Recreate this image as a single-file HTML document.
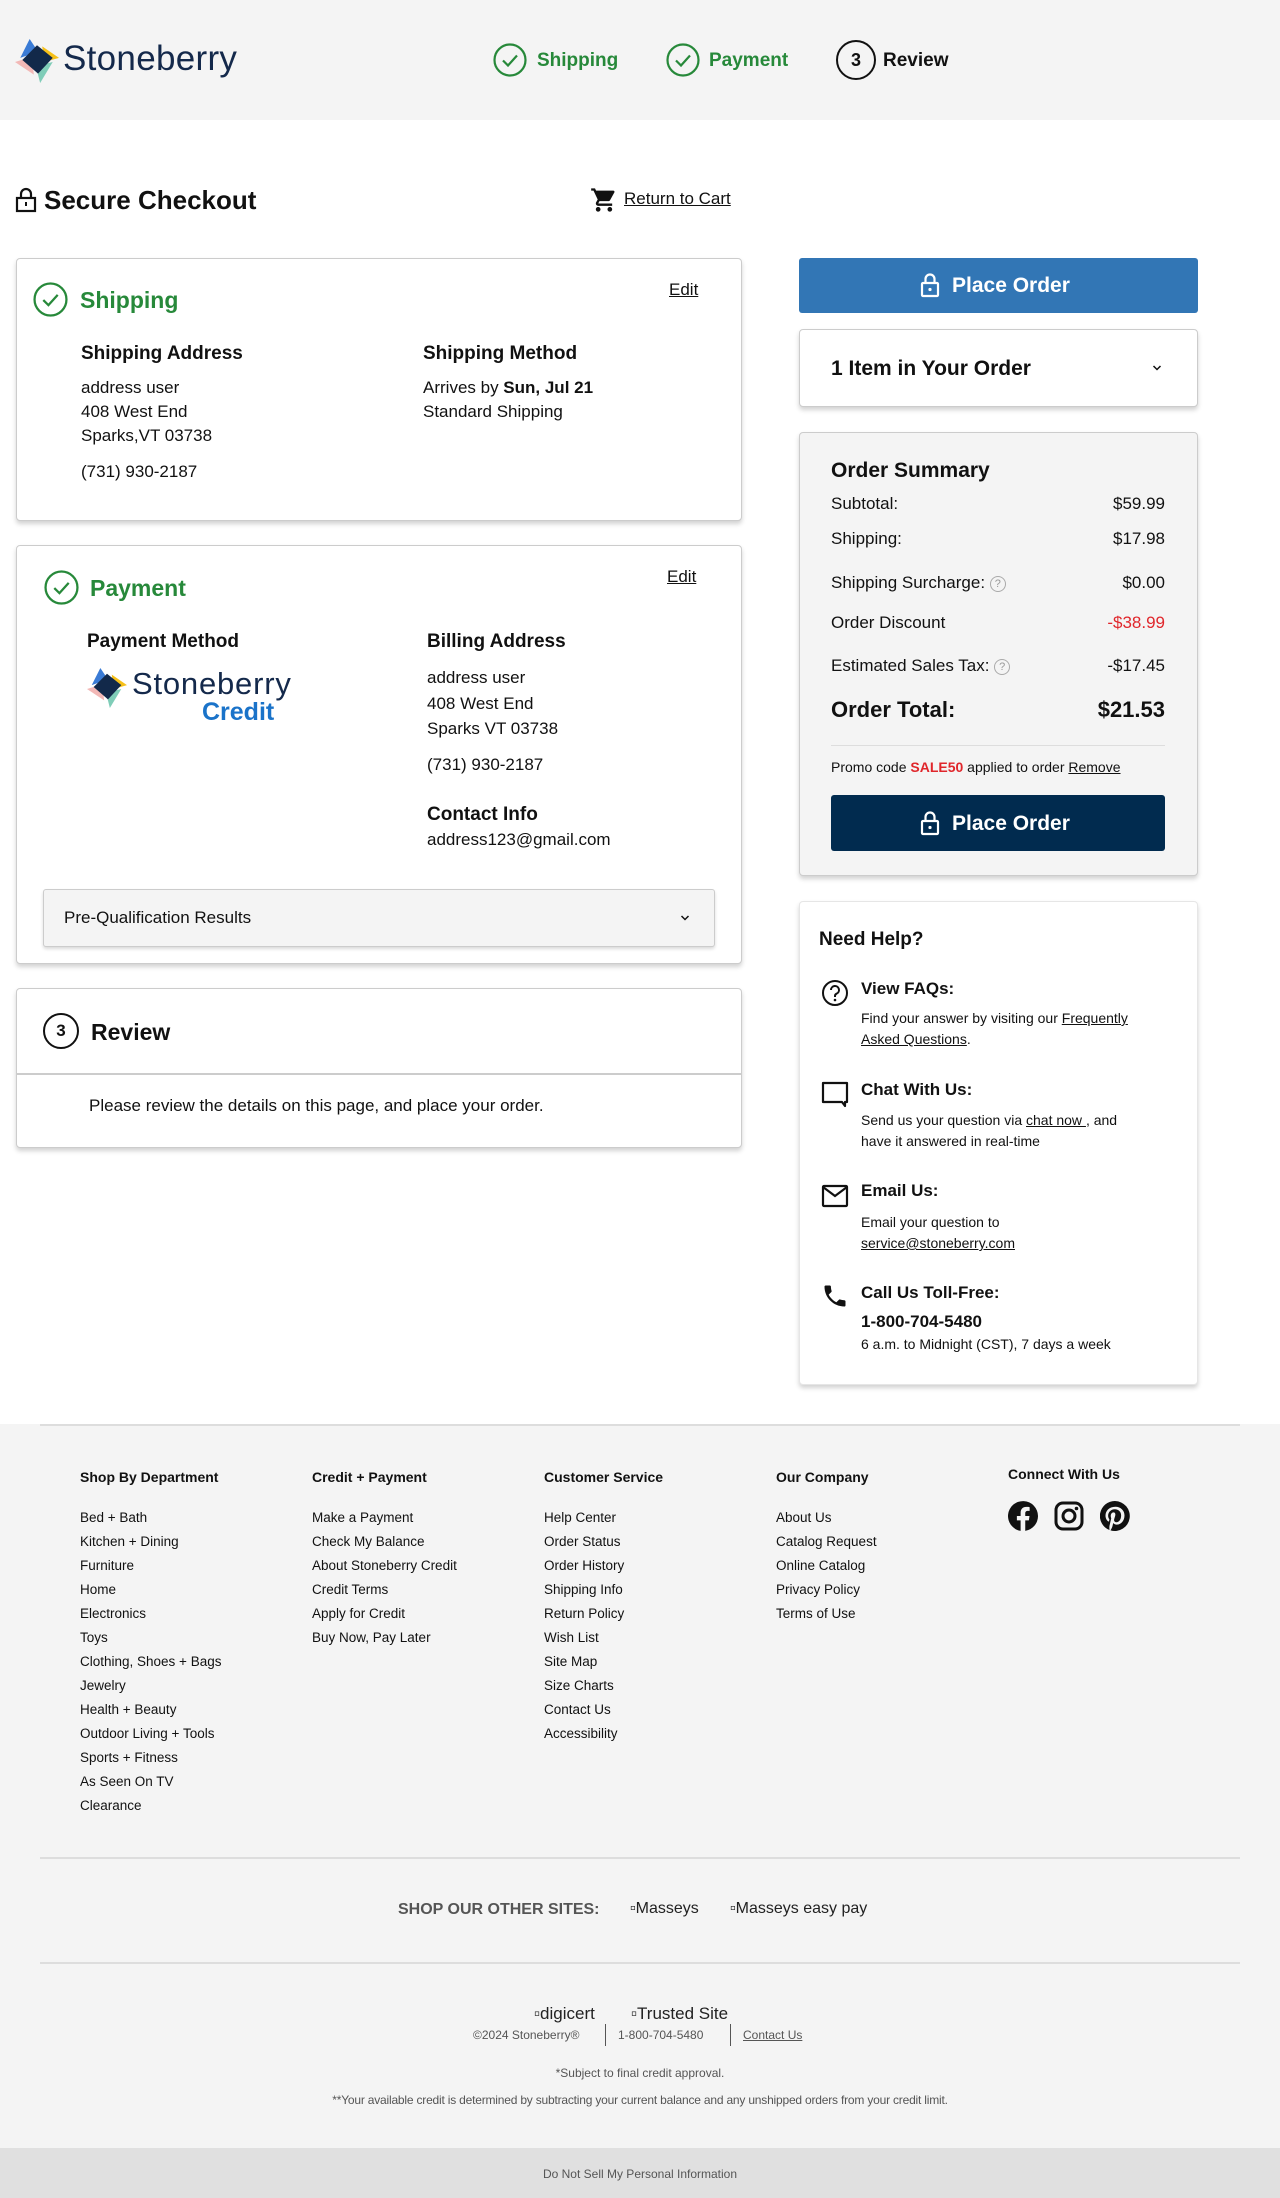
<!DOCTYPE html>
<html><head><meta charset="utf-8"><style>
*{margin:0;padding:0;box-sizing:border-box}
body{width:1280px;height:2198px;position:relative;background:#fff;font-family:"Liberation Sans",Arial,sans-serif;color:#111;overflow:hidden}
.a{position:absolute;white-space:nowrap}
.card{position:absolute;background:#fff;border:1px solid #ccc;border-radius:4px;box-shadow:0 3px 5px rgba(0,0,0,.18)}
.g{color:#27893a;font-weight:bold}
.u{text-decoration:underline}
.b{font-weight:bold}
.f17{font-size:17px;line-height:22px}
.f14{font-size:14px;line-height:18px}
.f13{font-size:13.5px;line-height:18px}
.f12{font-size:12px;line-height:16px}
</style></head><body>
<!-- header -->
<div class="a" style="left:0;top:0;width:1280px;height:120px;background:#f4f4f4"></div>
<svg class="a" style="left:15px;top:39px" width="44" height="44" viewBox="0 0 42 42">
<polygon points="0,22 16,17 18,34" fill="#f2b8b6"/>
<polygon points="20,26 36,22 24,42" fill="#7fcdb8"/>
<polygon points="14,0 22,12 5,18" fill="#3a7bd5"/>
<polygon points="26,7 42,18 28,22" fill="#f6c018"/>
<polygon points="21,6 36,18 22,33 7,20" fill="#12294a"/>
</svg>
<div class="a" style="left:63px;top:37px;font-size:35px;line-height:44px;color:#14294b;letter-spacing:0.3px">Stoneberry</div>
<svg class="a" style="left:493px;top:43px" width="34" height="34" viewBox="0 0 34 34"><circle cx="17" cy="17" r="15.5" fill="none" stroke="#27893a" stroke-width="2.2"/><path d="M10 17.5l5 5 9-10" fill="none" stroke="#27893a" stroke-width="2.2"/></svg>
<div class="a g" style="left:537px;top:49px;font-size:19px;line-height:24px">Shipping</div>
<svg class="a" style="left:666px;top:43px" width="34" height="34" viewBox="0 0 34 34"><circle cx="17" cy="17" r="15.5" fill="none" stroke="#27893a" stroke-width="2.2"/><path d="M10 17.5l5 5 9-10" fill="none" stroke="#27893a" stroke-width="2.2"/></svg>
<div class="a g" style="left:709px;top:49px;font-size:19px;line-height:24px">Payment</div>
<div class="a" style="left:836px;top:40px;width:40px;height:40px;border:2.2px solid #111;border-radius:50%;text-align:center;font-size:18px;line-height:36px;font-weight:bold">3</div>
<div class="a b" style="left:883px;top:49px;font-size:19px;line-height:24px">Review</div>

<!-- secure checkout -->
<svg class="a" style="left:15px;top:187px" width="22" height="26" viewBox="0 0 22 26"><rect x="2" y="11" width="18" height="13" fill="none" stroke="#111" stroke-width="2.2"/><path d="M6 11V7a5 5 0 0 1 10 0v4" fill="none" stroke="#111" stroke-width="2.2"/><rect x="10" y="15" width="2" height="4" fill="#111"/></svg>
<div class="a b" style="left:44px;top:184px;font-size:26px;line-height:32px">Secure Checkout</div>
<svg class="a" style="left:590px;top:186px" width="28" height="28" viewBox="0 0 24 24"><path d="M7 18c-1.1 0-2 .9-2 2s.9 2 2 2 2-.9 2-2-.9-2-2-2zM1 2v2h2l3.6 7.6-1.4 2.4c-.1.3-.2.6-.2 1 0 1.1.9 2 2 2h12v-2H7.4c-.1 0-.2-.1-.2-.2v-.1l.9-1.7h7.5c.8 0 1.4-.4 1.7-1l3.6-6.5c.1-.2.1-.3.1-.5 0-.6-.4-1-1-1H5.2L4.3 2H1zm16 16c-1.1 0-2 .9-2 2s.9 2 2 2 2-.9 2-2-.9-2-2-2z" fill="#111"/></svg>
<div class="a u f17" style="left:624px;top:188px">Return to Cart</div>

<!-- shipping card -->
<div class="card" style="left:16px;top:258px;width:726px;height:263px"></div>
<svg class="a" style="left:33px;top:282px" width="35" height="35" viewBox="0 0 34 34"><circle cx="17" cy="17" r="15.5" fill="none" stroke="#27893a" stroke-width="2.2"/><path d="M10 17.5l5 5 9-10" fill="none" stroke="#27893a" stroke-width="2.2"/></svg>
<div class="a g" style="left:80px;top:286px;font-size:23px;line-height:28px">Shipping</div>
<div class="a u f17" style="left:669px;top:279px">Edit</div>
<div class="a b" style="left:81px;top:342px;font-size:19px;line-height:24px">Shipping Address</div>
<div class="a b" style="left:423px;top:342px;font-size:19px;line-height:24px">Shipping Method</div>
<div class="a f17" style="left:81px;top:377px">address user</div>
<div class="a f17" style="left:81px;top:401px">408 West End</div>
<div class="a f17" style="left:81px;top:425px">Sparks,VT 03738</div>
<div class="a f17" style="left:81px;top:461px">(731) 930-2187</div>
<div class="a f17" style="left:423px;top:377px">Arrives by <b>Sun, Jul 21</b></div>
<div class="a f17" style="left:423px;top:401px">Standard Shipping</div>

<!-- payment card -->
<div class="card" style="left:16px;top:545px;width:726px;height:419px"></div>
<svg class="a" style="left:44px;top:570px" width="35" height="35" viewBox="0 0 34 34"><circle cx="17" cy="17" r="15.5" fill="none" stroke="#27893a" stroke-width="2.2"/><path d="M10 17.5l5 5 9-10" fill="none" stroke="#27893a" stroke-width="2.2"/></svg>
<div class="a g" style="left:90px;top:574px;font-size:23px;line-height:28px">Payment</div>
<div class="a u f17" style="left:667px;top:566px">Edit</div>
<div class="a b" style="left:87px;top:630px;font-size:19px;line-height:24px">Payment Method</div>
<div class="a b" style="left:427px;top:630px;font-size:19px;line-height:24px">Billing Address</div>
<svg class="a" style="left:87px;top:668px" width="40" height="40" viewBox="0 0 42 42">
<polygon points="0,22 16,17 18,34" fill="#f2b8b6"/>
<polygon points="20,26 36,22 24,42" fill="#7fcdb8"/>
<polygon points="14,0 22,12 5,18" fill="#3a7bd5"/>
<polygon points="26,7 42,18 28,22" fill="#f6c018"/>
<polygon points="21,6 36,18 22,33 7,20" fill="#12294a"/>
</svg>
<div class="a" style="left:132px;top:666px;font-size:31px;line-height:36px;color:#14294b;letter-spacing:0.8px">Stoneberry</div>
<div class="a b" style="left:202px;top:697px;font-size:25px;line-height:30px;color:#1a73c9">Credit</div>
<div class="a f17" style="left:427px;top:667px">address user</div>
<div class="a f17" style="left:427px;top:693px">408 West End</div>
<div class="a f17" style="left:427px;top:718px">Sparks VT 03738</div>
<div class="a f17" style="left:427px;top:754px">(731) 930-2187</div>
<div class="a b" style="left:427px;top:803px;font-size:19px;line-height:24px">Contact Info</div>
<div class="a f17" style="left:427px;top:829px">address123@gmail.com</div>
<div class="a" style="left:43px;top:889px;width:672px;height:58px;background:#f4f4f4;border:1px solid #ccc;border-radius:3px;box-shadow:0 2px 3px rgba(0,0,0,.15)"></div>
<div class="a f17" style="left:64px;top:907px">Pre-Qualification Results</div>
<svg class="a" style="left:680px;top:914px" width="10" height="8" viewBox="0 0 10 8"><path d="M1.5 2l3.5 3.5L8.5 2" fill="none" stroke="#111" stroke-width="1.5"/></svg>

<!-- review card -->
<div class="card" style="left:16px;top:988px;width:726px;height:160px"></div>
<div class="a" style="left:43px;top:1013px;width:36px;height:36px;border:2.2px solid #111;border-radius:50%;text-align:center;font-size:17px;line-height:32px;font-weight:bold">3</div>
<div class="a b" style="left:91px;top:1018px;font-size:23px;line-height:28px">Review</div>
<div class="a" style="left:17px;top:1073px;width:724px;height:2px;background:#ccc"></div>
<div class="a f17" style="left:89px;top:1095px">Please review the details on this page, and place your order.</div>

<!-- right column -->
<div class="a" style="left:799px;top:258px;width:399px;height:55px;background:#3276b5;border-radius:3px"></div>
<svg class="a" style="left:920px;top:272px" width="20" height="26" viewBox="0 0 20 26"><rect x="2" y="11" width="16" height="13" rx="1" fill="none" stroke="#fff" stroke-width="2.2"/><path d="M5.5 11V7a4.5 4.5 0 0 1 9 0v4" fill="none" stroke="#fff" stroke-width="2.2"/><circle cx="10" cy="17.5" r="1.6" fill="#fff"/></svg>
<div class="a b" style="left:952px;top:273px;font-size:21px;line-height:26px;color:#fff">Place Order</div>

<div class="card" style="left:799px;top:329px;width:399px;height:78px"></div>
<div class="a b" style="left:831px;top:356px;font-size:21px;line-height:26px">1 Item in Your Order</div>
<svg class="a" style="left:1152px;top:364px" width="10" height="8" viewBox="0 0 10 8"><path d="M1.5 2l3.5 3.5L8.5 2" fill="none" stroke="#111" stroke-width="1.5"/></svg>

<div class="card" style="left:799px;top:432px;width:399px;height:444px;background:#f4f4f4"></div>
<div class="a b" style="left:831px;top:458px;font-size:21px;line-height:26px">Order Summary</div>
<div class="a f17" style="left:831px;top:493px">Subtotal:</div><div class="a f17" style="right:115px;top:493px">$59.99</div>
<div class="a f17" style="left:831px;top:528px">Shipping:</div><div class="a f17" style="right:115px;top:528px">$17.98</div>
<div class="a f17" style="left:831px;top:572px">Shipping Surcharge: <span style="display:inline-block;width:16px;height:16px;border:1px solid #aaa;border-radius:50%;font-size:11px;line-height:14px;text-align:center;color:#999;vertical-align:middle">?</span></div><div class="a f17" style="right:115px;top:572px">$0.00</div>
<div class="a f17" style="left:831px;top:612px">Order Discount</div><div class="a f17" style="right:115px;top:612px;color:#e0262b">-$38.99</div>
<div class="a f17" style="left:831px;top:655px">Estimated Sales Tax: <span style="display:inline-block;width:16px;height:16px;border:1px solid #aaa;border-radius:50%;font-size:11px;line-height:14px;text-align:center;color:#999;vertical-align:middle">?</span></div><div class="a f17" style="right:115px;top:655px">-$17.45</div>
<div class="a b" style="left:831px;top:696px;font-size:22px;line-height:27px">Order Total:</div><div class="a b" style="right:115px;top:696px;font-size:22px;line-height:27px">$21.53</div>
<div class="a" style="left:831px;top:745px;width:334px;height:1px;background:#ddd"></div>
<div class="a f14" style="left:831px;top:758px">Promo code <b style="color:#e0262b">SALE50</b> applied to order <span class="u">Remove</span></div>
<div class="a" style="left:831px;top:795px;width:334px;height:56px;background:#012b4f;border-radius:3px"></div>
<svg class="a" style="left:920px;top:810px" width="20" height="26" viewBox="0 0 20 26"><rect x="2" y="11" width="16" height="13" rx="1" fill="none" stroke="#fff" stroke-width="2.2"/><path d="M5.5 11V7a4.5 4.5 0 0 1 9 0v4" fill="none" stroke="#fff" stroke-width="2.2"/><circle cx="10" cy="17.5" r="1.6" fill="#fff"/></svg>
<div class="a b" style="left:952px;top:811px;font-size:21px;line-height:26px;color:#fff">Place Order</div>

<div class="card" style="left:799px;top:901px;width:399px;height:484px;border-color:#e6e6e6"></div>
<div class="a b" style="left:819px;top:928px;font-size:19px;line-height:24px">Need Help?</div>
<svg class="a" style="left:821px;top:979px" width="28" height="28" viewBox="0 0 28 28"><circle cx="14" cy="14" r="12" fill="none" stroke="#111" stroke-width="2"/><path d="M10 11a4 4 0 1 1 5.5 3.7c-1 .5-1.5 1.2-1.5 2.3v1" fill="none" stroke="#111" stroke-width="2"/><circle cx="14" cy="21" r="1.3" fill="#111"/></svg>
<div class="a b" style="left:861px;top:978px;font-size:17px;line-height:22px">View FAQs:</div>
<div class="a f14" style="left:861px;top:1009px">Find your answer by visiting our <span class="u">Frequently</span></div>
<div class="a f14" style="left:861px;top:1030px"><span class="u">Asked Questions</span>.</div>
<svg class="a" style="left:821px;top:1080px" width="28" height="28" viewBox="0 0 28 28"><path d="M2 3h24v19H24v4l-3-4H2z" fill="none" stroke="#111" stroke-width="2.2" stroke-linejoin="round"/></svg>
<div class="a b" style="left:861px;top:1079px;font-size:17px;line-height:22px">Chat With Us:</div>
<div class="a f14" style="left:861px;top:1111px">Send us your question via <span class="u">chat now </span>, and</div>
<div class="a f14" style="left:861px;top:1132px">have it answered in real-time</div>
<svg class="a" style="left:821px;top:1184px" width="28" height="24" viewBox="0 0 28 24"><rect x="2" y="2" width="24" height="20" rx="1" fill="none" stroke="#111" stroke-width="2.2"/><path d="M2 3l12 9 12-9" fill="none" stroke="#111" stroke-width="2.2"/></svg>
<div class="a b" style="left:861px;top:1180px;font-size:17px;line-height:22px">Email Us:</div>
<div class="a f14" style="left:861px;top:1213px">Email your question to</div>
<div class="a f14 u" style="left:861px;top:1234px">service@stoneberry.com</div>
<svg class="a" style="left:821px;top:1282px" width="28" height="28" viewBox="0 0 24 24"><path d="M6.6 10.8c1.4 2.8 3.8 5.1 6.6 6.6l2.2-2.2c.3-.3.7-.4 1-.2 1.1.4 2.3.6 3.6.6.6 0 1 .4 1 1V20c0 .6-.4 1-1 1C10.6 21 3 13.4 3 4c0-.6.4-1 1-1h3.5c.6 0 1 .4 1 1 0 1.3.2 2.5.6 3.6.1.3 0 .7-.2 1z" fill="#111"/></svg>
<div class="a b" style="left:861px;top:1282px;font-size:17px;line-height:22px">Call Us Toll-Free:</div>
<div class="a b" style="left:861px;top:1311px;font-size:17px;line-height:22px">1-800-704-5480</div>
<div class="a f14" style="left:861px;top:1335px">6 a.m. to Midnight (CST), 7 days a week</div>

<!-- footer -->
<div class="a" style="left:0;top:1424px;width:1280px;height:724px;background:#f4f4f4"></div>
<div class="a" style="left:40px;top:1424px;width:1200px;height:2px;background:#ddd"></div>
<div class="a b f14" style="left:80px;top:1468px">Shop By Department</div>
<div class="a b f14" style="left:312px;top:1468px">Credit + Payment</div>
<div class="a b f14" style="left:544px;top:1468px">Customer Service</div>
<div class="a b f14" style="left:776px;top:1468px">Our Company</div>
<div class="a b f14" style="left:1008px;top:1465px">Connect With Us</div>
<div class="a f13" style="left:80px;top:1506px;line-height:24px">Bed + Bath<br>Kitchen + Dining<br>Furniture<br>Home<br>Electronics<br>Toys<br>Clothing, Shoes + Bags<br>Jewelry<br>Health + Beauty<br>Outdoor Living + Tools<br>Sports + Fitness<br>As Seen On TV<br>Clearance</div>
<div class="a f13" style="left:312px;top:1506px;line-height:24px">Make a Payment<br>Check My Balance<br>About Stoneberry Credit<br>Credit Terms<br>Apply for Credit<br>Buy Now, Pay Later</div>
<div class="a f13" style="left:544px;top:1506px;line-height:24px">Help Center<br>Order Status<br>Order History<br>Shipping Info<br>Return Policy<br>Wish List<br>Site Map<br>Size Charts<br>Contact Us<br>Accessibility</div>
<div class="a f13" style="left:776px;top:1506px;line-height:24px">About Us<br>Catalog Request<br>Online Catalog<br>Privacy Policy<br>Terms of Use</div>
<svg class="a" style="left:1008px;top:1501px" width="30" height="30" viewBox="0 0 24 24"><path d="M24 12a12 12 0 1 0-13.9 11.9v-8.4H7.1V12h3V9.4c0-3 1.8-4.7 4.5-4.7 1.3 0 2.7.2 2.7.2v3h-1.5c-1.5 0-2 .9-2 1.9V12h3.4l-.5 3.5h-2.9v8.4A12 12 0 0 0 24 12z" fill="#111"/></svg>
<svg class="a" style="left:1054px;top:1501px" width="30" height="30" viewBox="0 0 30 30"><rect x="2" y="2" width="26" height="26" rx="7" fill="none" stroke="#111" stroke-width="3"/><circle cx="15" cy="15" r="6" fill="none" stroke="#111" stroke-width="3"/><circle cx="22.5" cy="7.5" r="1.8" fill="#111"/></svg>
<svg class="a" style="left:1100px;top:1501px" width="30" height="30" viewBox="0 0 24 24"><path d="M12 0a12 12 0 0 0-4.4 23.2c-.1-.9-.2-2.4 0-3.4l1.4-6s-.4-.7-.4-1.8c0-1.7 1-2.9 2.2-2.9 1 0 1.5.8 1.5 1.7 0 1-.7 2.6-1 4-.3 1.2.6 2.2 1.8 2.2 2.1 0 3.8-2.2 3.8-5.5 0-2.9-2.1-4.9-5-4.9-3.4 0-5.4 2.6-5.4 5.2 0 1 .4 2.1.9 2.7.1.1.1.2.1.3l-.3 1.4c-.1.2-.2.3-.4.2-1.5-.7-2.4-2.900-2.4-4.6 0-3.8 2.7-7.2 7.9-7.2 4.1 0 7.3 2.9 7.3 6.9 0 4.1-2.6 7.4-6.2 7.4-1.2 0-2.4-.6-2.8-1.4l-.7 2.9c-.3 1-1 2.3-1.5 3.1A12 12 0 1 0 12 0z" fill="#111"/></svg>
<div class="a" style="left:40px;top:1857px;width:1200px;height:2px;background:#ddd"></div>
<div class="a b" style="left:398px;top:1900px;font-size:16px;line-height:20px;color:#555">SHOP OUR OTHER SITES:</div>
<div class="a" style="left:630px;top:1899px;font-size:16px;line-height:20px;color:#222">▫Masseys</div>
<div class="a" style="left:730px;top:1899px;font-size:16px;line-height:20px;color:#222">▫Masseys easy pay</div>
<div class="a" style="left:40px;top:1962px;width:1200px;height:2px;background:#ddd"></div>
<div class="a" style="left:534px;top:2004px;font-size:17px;line-height:20px;color:#222">▫digicert</div>
<div class="a" style="left:631px;top:2004px;font-size:17px;line-height:20px;color:#222">▫Trusted Site</div>
<div class="a f12" style="left:473px;top:2027px;color:#555">©2024 Stoneberry®</div>
<div class="a" style="left:605px;top:2024px;width:1px;height:22px;background:#555"></div>
<div class="a f12" style="left:618px;top:2027px;color:#555">1-800-704-5480</div>
<div class="a" style="left:730px;top:2024px;width:1px;height:22px;background:#555"></div>
<div class="a f12 u" style="left:743px;top:2027px;color:#555">Contact Us</div>
<div class="a f12" style="left:0;width:1280px;text-align:center;top:2065px;color:#555">*Subject to final credit approval.</div>
<div class="a f12" style="left:0;width:1280px;text-align:center;top:2092px;color:#555;letter-spacing:-0.2px">**Your available credit is determined by subtracting your current balance and any unshipped orders from your credit limit.</div>
<div class="a" style="left:0;top:2148px;width:1280px;height:50px;background:#e0e0e0"></div>
<div class="a f12" style="left:0;width:1280px;text-align:center;top:2166px;color:#555">Do Not Sell My Personal Information</div>
</body></html>
